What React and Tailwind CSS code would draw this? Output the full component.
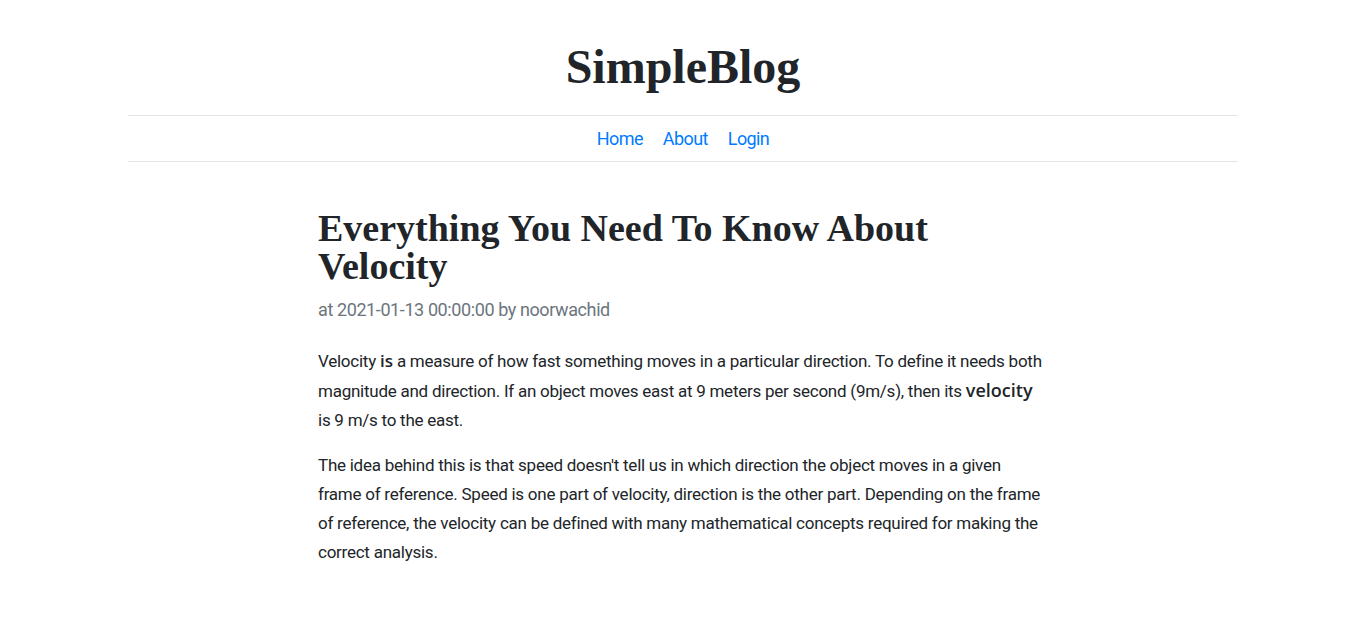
const display = { fontFamily: "'Liberation Serif', 'DejaVu Serif', serif" };
const body = { fontFamily: "'Roboto', 'Liberation Sans', sans-serif" };
const strong = { fontFamily: "'Open Sans', 'Roboto', sans-serif" };

export default function App() {
  return (
    <div className="min-h-screen bg-white text-[#212529]" style={body}>
      <div className="mx-auto w-[1110px]">
        <header className="pt-[38px] pb-[19px] text-center">
          <h1 className="text-[48px] leading-[58px] font-bold text-[#212529]" style={display}>
            SimpleBlog
          </h1>
        </header>
        <nav className="flex h-[47px] items-center justify-center gap-[20px] border-y border-[#e5e5e5] text-[18px] tracking-[-0.6px]">
          <a href="#" className="text-[#007bff]">Home</a>
          <a href="#" className="text-[#007bff]">About</a>
          <a href="#" className="text-[#007bff]">Login</a>
        </nav>
      </div>

      <main className="mx-auto w-[730px] pt-[47px]">
        <h2 className="text-[38px] leading-[38px] font-bold text-[#212529]" style={display}>
          Everything You Need To Know About Velocity
        </h2>
        <p className="mt-[10px] text-[18px] leading-[30px] tracking-[-0.4px] text-[#6c757d]">
          at 2021-01-13 00:00:00 by noorwachid
        </p>
        <div className="mt-[21px] text-[17px] leading-[29px] tracking-[-0.25px]">
          <p className="mb-[16px] pr-[3px]">
            Velocity <b className="font-semibold tracking-normal" style={strong}>is</b> a measure of how fast something
            moves in a particular direction. To define it needs both magnitude and direction. If an object moves east at 9
            meters per second (9m/s), then its{" "}
            <b className="text-[18px] font-semibold tracking-normal" style={strong}>velocity</b> is 9 m/s to the east.
          </p>
          <p>
            The idea behind this is that speed doesn't tell us in which direction the object moves in a given frame of
            reference. Speed is one part of velocity, direction is the other part. Depending on the frame of reference, the
            velocity can be defined with many mathematical concepts required for making the correct analysis.
          </p>
        </div>
      </main>
    </div>
  );
}
